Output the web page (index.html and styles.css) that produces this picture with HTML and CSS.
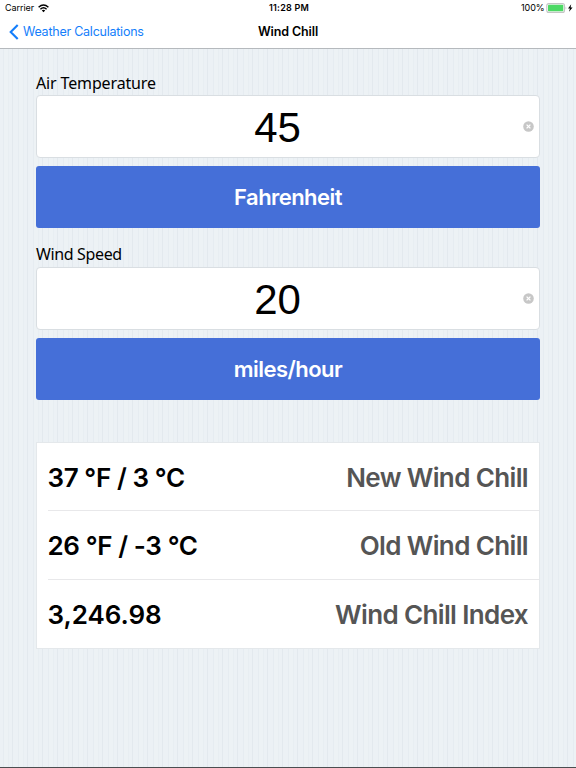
FILE: index.html
```html
<!DOCTYPE html>
<html lang="en">
<head>
<meta charset="utf-8">
<title>Wind Chill</title>
<link rel="stylesheet" href="styles.css">
</head>
<body>
<header class="top">
  <div class="status">
    <div class="carrier"><span class="carrier-name">Carrier</span>
      <svg class="wifi" width="11" height="9" viewBox="0 0 11 9" fill="none" stroke="#000" stroke-width="1.5"><path d="M.6 3.2Q5.5-1.2 10.4 3.2M2.4 5.2Q5.5 2.4 8.6 5.2"/><path d="M3.8 6.5Q5.5 5 7.2 6.5L5.5 8.3Z" fill="#000" stroke="none"/></svg>
    </div>
    <span class="clock">11:28 PM</span>
    <div class="power"><span class="percent">100%</span>
      <svg width="27" height="10" viewBox="0 0 27 10"><rect x=".8" y=".6" width="17.7" height="8.8" rx="2" fill="#fff" stroke="#c4c4c4" stroke-width="1.1"/><rect x="2" y="1.8" width="15.3" height="6.4" rx=".8" fill="#4cd964"/><path d="M19.7 3.5q1.3 1.5 0 3z" fill="#aaa"/><path d="M25.2 1.2L22 5.4H23.9L23 8.8L26.6 4.4H24.6Z" fill="#000"/></svg>
    </div>
  </div>
  <nav class="nav">
    <a class="back"><svg width="10" height="16" viewBox="0 0 10 16" fill="none" stroke="#147efb" stroke-width="2.1"><path d="M8.7 1L1.7 8L8.7 15"/></svg><span class="back-text">Weather Calculations</span></a>
    <h1 class="title">Wind Chill</h1>
    <span></span>
  </nav>
</header>
<main class="content">
  <section class="group">
    <h2 class="label temperature">Air Temperature</h2>
    <div class="field"><span></span><span class="value">45</span><svg class="clear" width="11" height="11" viewBox="0 0 11 11"><circle cx="5.5" cy="5.5" r="5.3" fill="#c7c7c7"/><path d="M3.6 3.6L7.4 7.4M7.4 3.6L3.6 7.4" stroke="#fff" stroke-width="1.3"/></svg></div>
    <div class="unit"><span class="fahrenheit">Fahrenheit</span></div>
  </section>
  <section class="group">
    <h2 class="label speed">Wind Speed</h2>
    <div class="field"><span></span><span class="value">20</span><svg class="clear" width="11" height="11" viewBox="0 0 11 11"><circle cx="5.5" cy="5.5" r="5.3" fill="#c7c7c7"/><path d="M3.6 3.6L7.4 7.4M7.4 3.6L3.6 7.4" stroke="#fff" stroke-width="1.3"/></svg></div>
    <div class="unit"><span class="miles">miles/hour</span></div>
  </section>
  <section class="results">
    <div class="row"><span class="reading">37 °F / 3 °C</span><span class="name">New Wind Chill</span></div>
    <div class="row"><span class="reading">26 °F / -3 °C</span><span class="name">Old Wind Chill</span></div>
    <div class="row"><span class="reading index">3,246.98</span><span class="name">Wind Chill Index</span></div>
  </section>
</main>
</body>
</html>
```

FILE: styles.css
```css
* { box-sizing: border-box; }
body {
  margin: 0;
  height: 768px;
  overflow: hidden;
  border-bottom: 1px solid #4b4e50;
  font-family: Inter, "Liberation Sans", sans-serif;
  color: #000;
  background: repeating-linear-gradient(90deg, #ecf1f5 0 3px, #e6ecf1 3px 4px, #edf2f5 4px 8px, #e8eef2 8px 9px, #ecf1f5 9px 12px, #e3e9ee 12px 13px, #ecf1f5 13px 15px);
}
.top { height: 49px; background: #fff; border-bottom: 1px solid #b5b9bd; }
.status, .nav { display: grid; grid-template-columns: 1fr auto 1fr; align-items: center; }
.status { height: 16px; padding: 0 3px 0 5px; font-size: 9px; line-height: 16px; }
.carrier, .power, .back { display: flex; align-items: center; }
.carrier { gap: 4px; }
.carrier-name { letter-spacing: -.05px; }
.clock { font-weight: 600; font-size: 9px; letter-spacing: .2px; }
.power { justify-content: flex-end; gap: 1.5px; }
.percent { letter-spacing: -.1px; }
.nav { height: 31px; padding: 0 9px; font-size: 13px; line-height: 31px; }
.back { gap: 4px; color: #147efb; }
.back-text { font-size: 12.5px; letter-spacing: -.24px; }
.title { margin: 0; font-size: 12.5px; font-weight: 600; letter-spacing: -.12px; }
.content { padding: 23px 36px 0; }
.group { height: 172px; }
.label {
  margin: 0;
  height: 23px;
  font: 400 16px/22px "Noto Sans", sans-serif;
}
.temperature { letter-spacing: -.14px; }
.speed { letter-spacing: -.36px; line-height: 21px; }
.field {
  display: grid;
  grid-template-columns: 17px 1fr 11px;
  align-items: center;
  height: 63px;
  margin-bottom: 7.5px;
  padding-right: 5px;
  border: 1px solid #d9dee2;
  border-radius: 4px;
  background: #fff;
}
.clear { margin-top: -1px; }
.value { padding-right: 22px; font: 42px/60px "Liberation Sans", sans-serif; text-align: center; padding-top: 2px; }
.unit {
  height: 62.5px;
  border-radius: 3px;
  background: #456fd8;
  color: #fff;
  font-size: 22px;
  font-weight: 600;
  line-height: 63px;
  letter-spacing: -.55px;
  text-align: center;
}
.results { margin-top: 26px; border: 1px solid #e4e8eb; background: #fff; }
.row {
  display: flex;
  justify-content: space-between;
  height: 69px;
  margin-left: 11px;
  padding-right: 11px;
  font-size: 26px;
  font-weight: 600;
  line-height: 69px;
}
.row:first-child { height: 67px; }
.row + .row { border-top: 1px solid #e8e8ea; }
.reading { margin-left: -.5px; letter-spacing: -.4px; }
.index { letter-spacing: -.05px; }
.name { color: #555; letter-spacing: -.63px; }
```
